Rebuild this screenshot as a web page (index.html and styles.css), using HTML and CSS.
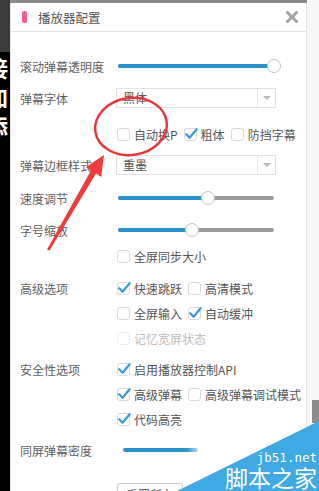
FILE: index.html
```html
<!DOCTYPE html>
<html>
<head>
<meta charset="utf-8">
<link rel="stylesheet" href="styles.css">
</head>
<body>
<div class="page">
  <div class="video-edge">
    <div class="edge-top"></div>
    <div class="subs"><span>接</span><span>加</span><span>添</span></div>
  </div>
  <div class="main">
    <div class="topband"></div>
    <div class="panel">
      <div class="header">
        <i class="mark"></i>
        <span class="title">播放器配置</span>
        <svg class="close" viewBox="0 0 12 12"><path d="M1.5 1.5L10.5 10.5M10.5 1.5L1.5 10.5" stroke="#a3a3a3" stroke-width="3" stroke-linecap="round"/></svg>
      </div>
      <div class="body">
        <div class="row">
          <div class="label">滚动弹幕透明度</div>
          <div class="slider"><div class="fill" style="width:100%"></div><div class="thumb" style="left:100%"></div></div>
        </div>
        <div class="row">
          <div class="label">弹幕字体</div>
          <div class="select"><span class="value">黑体</span><span class="arrow"></span></div>
        </div>
        <div class="row row-check r3">
          <div class="label"></div>
          <div class="checks">
            <label class="check"><span class="box"></span>自动换P</label>
            <label class="check"><span class="box"><svg viewBox="0 0 14 14"><path d="M2.2 7.2L5.6 10.8L12.6 2.2" fill="none" stroke="#3b9ad8" stroke-width="2.2" stroke-linecap="round" stroke-linejoin="round"/></svg></span>粗体</label>
            <label class="check"><span class="box"></span>防挡字幕</label>
          </div>
        </div>
        <div class="row row-check r4">
          <div class="label">弹幕边框样式</div>
          <div class="select"><span class="value">重墨</span><span class="arrow"></span></div>
        </div>
        <div class="row r5">
          <div class="label">速度调节</div>
          <div class="slider"><div class="fill" style="width:57.7%"></div><div class="thumb" style="left:57.7%"></div></div>
        </div>
        <div class="row">
          <div class="label">字号缩放</div>
          <div class="slider"><div class="fill" style="width:47.4%"></div><div class="thumb" style="left:47.4%"></div></div>
        </div>
        <div class="row r7">
          <div class="label"></div>
          <div class="checks">
            <label class="check"><span class="box"></span>全屏同步大小</label>
          </div>
        </div>
        <div class="group g1">
          <div class="label">高级选项</div>
          <div class="lines">
            <div class="checks line">
              <label class="check"><span class="box"><svg viewBox="0 0 14 14"><path d="M2.2 7.2L5.6 10.8L12.6 2.2" fill="none" stroke="#3b9ad8" stroke-width="2.2" stroke-linecap="round" stroke-linejoin="round"/></svg></span>快速跳跃</label>
              <label class="check"><span class="box"></span>高清模式</label>
            </div>
            <div class="checks line">
              <label class="check"><span class="box"></span>全屏输入</label>
              <label class="check"><span class="box"><svg viewBox="0 0 14 14"><path d="M2.2 7.2L5.6 10.8L12.6 2.2" fill="none" stroke="#3b9ad8" stroke-width="2.2" stroke-linecap="round" stroke-linejoin="round"/></svg></span>自动缓冲</label>
            </div>
            <div class="checks line">
              <label class="check off"><span class="box"></span>记忆宽屏状态</label>
            </div>
          </div>
        </div>
        <div class="group g2">
          <div class="label">安全性选项</div>
          <div class="lines">
            <div class="checks line">
              <label class="check"><span class="box"><svg viewBox="0 0 14 14"><path d="M2.2 7.2L5.6 10.8L12.6 2.2" fill="none" stroke="#3b9ad8" stroke-width="2.2" stroke-linecap="round" stroke-linejoin="round"/></svg></span>启用播放器控制API</label>
            </div>
            <div class="checks line">
              <label class="check"><span class="box"><svg viewBox="0 0 14 14"><path d="M2.2 7.2L5.6 10.8L12.6 2.2" fill="none" stroke="#3b9ad8" stroke-width="2.2" stroke-linecap="round" stroke-linejoin="round"/></svg></span>高级弹幕</label>
              <label class="check"><span class="box"></span>高级弹幕调试模式</label>
            </div>
            <div class="checks line">
              <label class="check"><span class="box"><svg viewBox="0 0 14 14"><path d="M2.2 7.2L5.6 10.8L12.6 2.2" fill="none" stroke="#3b9ad8" stroke-width="2.2" stroke-linecap="round" stroke-linejoin="round"/></svg></span>代码高亮</label>
            </div>
          </div>
        </div>
        <div class="row r-density">
          <div class="label">同屏弹幕密度</div>
          <div class="slider density"><div class="fill" style="width:100%"></div></div>
        </div>
        <div class="actions">
          <button class="btn">重置所有</button>
        </div>
      </div>
    </div>
  </div>
  <div class="side"><div class="scroll-thumb"></div></div>
</div>
<svg class="annot" viewBox="0 0 319 491" width="319" height="491">
  <ellipse cx="131" cy="126.5" rx="36" ry="28.5" fill="none" stroke="#e8353a" stroke-width="2.4" transform="rotate(-8 131 126.5)"/>
  <polygon points="104,155 101.2,177 96,173.6 49.5,250.5 47,249.5 91,170.4 85.8,167.3" fill="#ee3b3b"/>
</svg>
<div class="watermark">
  <svg class="wm-bg" viewBox="0 0 142 70" preserveAspectRatio="none"><polygon points="0,70 142,70 142,0" fill="#3ea9e2"/></svg>
  <span class="wm-url">jb51.net</span>
  <span class="wm-name">脚本之家</span>
</div>
</body>
</html>
```

FILE: styles.css
```css
* { box-sizing: border-box; }
html, body { margin: 0; padding: 0; }
body {
  width: 319px;
  height: 491px;
  overflow: hidden;
  position: relative;
  font-family: "Noto Sans CJK SC", "Noto Sans", sans-serif;
  background: #f6f6f6;
}
.page { display: flex; height: 491px; }

.video-edge {
  width: 10px;
  flex: none;
  background: #000;
  overflow: hidden;
  display: flex;
  flex-direction: column;
}
.edge-top { height: 52px; flex: none; background: #3a3a3a; }
.subs {
  display: flex;
  flex-direction: column;
  margin-left: -14px;
  margin-top: 1px;
  color: #fff;
  font-size: 22px;
  font-weight: 700;
  line-height: 29px;
}

.main { width: 297px; flex: none; display: flex; flex-direction: column; }
.topband { height: 3px; background: #8a8a8a; flex: none; }
.panel {
  flex: 1;
  background: #fff;
  border-left: 1px solid #e3e3e3;
  border-right: 1px solid #e3e3e3;
  overflow: hidden;
}
.header {
  height: 29px;
  border-bottom: 1px solid #e6e6e6;
  display: flex;
  align-items: center;
  padding: 0 8px 0 11px;
}
.mark { width: 5px; height: 12px; background: #f25d8e; border-radius: 2px; flex: none; }
.title { margin-left: 11px; font-size: 12.5px; color: #555; }
.close { margin-left: auto; width: 12px; height: 12px; }

.body { padding: 18px 0 0 9px; }
.row { display: flex; align-items: center; height: 32px; }
.r3 { height: 24px; margin-top: 8px; }
.r4 { height: 24px; margin-top: 7px; }
.r5 { margin-top: 5px; }
.r7 { height: 20px; }
.r-density { margin-top: 2px; }

.label {
  width: 96px;
  flex: none;
  font-size: 12px;
  color: #5f5f5f;
  white-space: nowrap;
}

.slider {
  position: relative;
  width: 156px;
  height: 4px;
  margin-left: 2px;
  background: #9b9b9b;
  border-radius: 2px;
}
.fill { height: 100%; background: #2b93cb; border-radius: 2px; }
.thumb {
  position: absolute;
  top: 50%;
  width: 14px;
  height: 14px;
  margin: -7px 0 0 -7px;
  border: 1px solid #c4c4c4;
  border-radius: 50%;
  background: #fff;
}
.slider.density { width: 75px; margin-left: 7px; background: transparent; }
.slider.density .fill { background: linear-gradient(to right, #2b93cb 85%, rgba(43,147,203,0.35)); }

.select {
  display: flex;
  width: 160px;
  height: 20px;
  border: 1px solid #e2e2e2;
  background: #fff;
}
.select .value { flex: 1; padding-left: 6px; font-size: 12px; color: #555; line-height: 18px; }
.select .arrow {
  width: 18px;
  border-left: 1px solid #e8e8e8;
  display: flex;
  align-items: center;
  justify-content: center;
}
.select .arrow::after {
  content: "";
  border-left: 4px solid transparent;
  border-right: 4px solid transparent;
  border-top: 4px solid #b8b8b8;
}

.checks { display: flex; align-items: center; padding-left: 1px; }
.check {
  display: flex;
  align-items: center;
  margin-right: 6px;
  font-size: 12px;
  color: #555;
  white-space: nowrap;
}
.box {
  position: relative;
  width: 13px;
  height: 13px;
  flex: none;
  border: 1px solid #dadada;
  border-radius: 3px;
  background: #fff;
  margin-right: 4px;
}
.box svg { position: absolute; left: -1px; top: -2px; width: 14px; height: 14px; }
.check.off { color: #bdbdbd; }
.check.off .box { border-color: #eeeeee; }

.group { display: flex; }
.group .label { height: 25px; display: flex; align-items: center; }
.g1 { margin-top: 10px; }
.g2 { margin-top: 6px; }
.lines { display: flex; flex-direction: column; }
.line { height: 25px; }

.actions { padding-left: 97px; margin-top: 15px; }
.btn {
  height: 24px;
  padding: 0 8px;
  border: 1px solid #cccccc;
  border-radius: 3px;
  background: #fff;
  font-family: "Noto Sans CJK SC", sans-serif;
  font-size: 12px;
  color: #444;
}

.side { flex: 1; background: #f7f7f7; padding-top: 400px; }
.scroll-thumb { margin-left: 5px; height: 23px; background: #8c8c8c; }

.annot { position: absolute; left: 0; top: 0; pointer-events: none; }

.watermark {
  position: absolute;
  right: 0;
  bottom: 0;
  width: 142px;
  height: 70px;
  display: flex;
  flex-direction: column;
  align-items: flex-end;
  padding: 30px 2px 0 0;
  color: #fff;
}
.wm-bg { position: absolute; left: 0; top: 0; width: 100%; height: 100%; }
.wm-url {
  position: relative;
  font-family: "DejaVu Sans Mono", monospace;
  font-size: 12.5px;
  line-height: 13px;
}
.wm-name {
  position: relative;
  margin-top: 2px;
  font-family: "Noto Sans CJK SC", sans-serif;
  font-size: 23px;
  line-height: 23px;
}
```
